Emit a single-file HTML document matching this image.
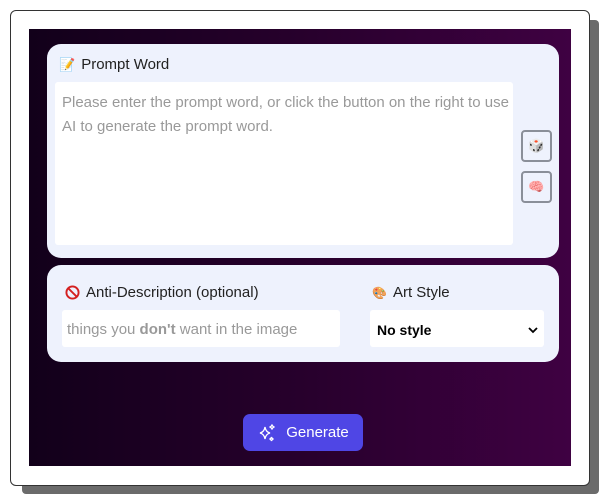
<!DOCTYPE html>
<html><head><style>
*{box-sizing:border-box;margin:0;padding:0}
body{width:600px;height:495px;background:#fff;font-family:"Liberation Sans","DejaVu Sans",sans-serif;position:relative;overflow:hidden}
.shadow{position:absolute;left:22px;top:20px;width:577px;height:474px;background:#6b6b6b;border-radius:4px}
.card{position:absolute;left:10px;top:10px;width:580px;height:476px;background:#fff;border:1px solid #333;border-radius:6px}
.dark{position:absolute;left:29px;top:29px;width:542px;height:437px;background:linear-gradient(90deg,#12001a,#27002c 50%,#3f0142)}
.p{position:absolute;left:47px;width:512px;background:#eef2fd;border-radius:14px}
.lbl{position:absolute;font-size:15px;color:#222;display:flex;align-items:center;gap:6px}
.ta{position:absolute;left:8px;top:38px;width:458px;height:163px;background:#fff;border-radius:3px;padding:9px 7px;color:#999;font-size:15px;line-height:24px;white-space:nowrap}
.btn{position:absolute;left:474px;width:31px;height:32px;border:2px solid #8a8f99;border-radius:4px;display:flex;align-items:center;justify-content:center;font-size:13px}
.in{position:absolute;background:#fff;border-radius:3px;height:37px;font-size:15px;display:flex;align-items:center}
.gen{position:absolute;left:243px;top:414px;width:120px;height:37px;background:#4f46e5;border-radius:7px;color:#fff;font-size:15px;display:flex;align-items:center;justify-content:center;gap:9px}
</style></head><body>
<div class="shadow"></div>
<div class="card"></div>
<div class="dark"></div>
<div class="p" style="top:44px;height:214px">
 <div class="lbl" style="left:12px;top:12px"><span style="font-size:13px">📝</span>Prompt Word</div>
 <div class="ta">Please enter the prompt word, or click the button on the right to use<br>AI to generate the prompt word.</div>
 <div class="btn" style="top:86px">🎲</div>
 <div class="btn" style="top:127px">🧠</div>
</div>
<div class="p" style="top:265px;height:97px">
 <div class="lbl" style="left:18px;top:19px"><svg width="15" height="15" viewBox="0 0 16 16"><circle cx="8" cy="8" r="6.5" fill="none" stroke="#d42020" stroke-width="2"/><path d="M3.5 3.5L12.5 12.5" stroke="#d42020" stroke-width="2"/></svg>Anti-Description (optional)</div>
 <div class="in" style="left:15px;top:45px;width:278px;padding-left:5px;padding-top:2px;color:#999">things you&nbsp;<b>don't</b>&nbsp;want in the image</div>
 <div class="lbl" style="left:325px;top:19px"><span style="font-size:12px">🎨</span>Art Style</div>
 <div class="in" style="left:323px;top:45px;width:174px;padding-left:7px;padding-top:2px;color:#000;font-weight:bold;font-size:14px;justify-content:space-between;padding-right:6px">No style<svg width="10" height="8" viewBox="0 0 10 8"><path d="M1 2l4 4 4-4" fill="none" stroke="#000" stroke-width="1.8"/></svg></div>
</div>
<div class="gen"><svg width="20" height="20" viewBox="0 0 20 20" fill="none" stroke="#fff" stroke-width="1.3"><path d="M8 4Q8.8 9 13 10Q8.8 11 8 16Q7.2 11 3 10Q7.2 9 8 4Z"/><path d="M15 1.5Q15.4 3.6 17.5 4Q15.4 4.4 15 6.5Q14.6 4.4 12.5 4Q14.6 3.6 15 1.5Z"/><path d="M14.5 14Q14.8 15.7 16.5 16Q14.8 16.3 14.5 18Q14.2 16.3 12.5 16Q14.2 15.7 14.5 14Z"/></svg>Generate</div>
</body></html>
